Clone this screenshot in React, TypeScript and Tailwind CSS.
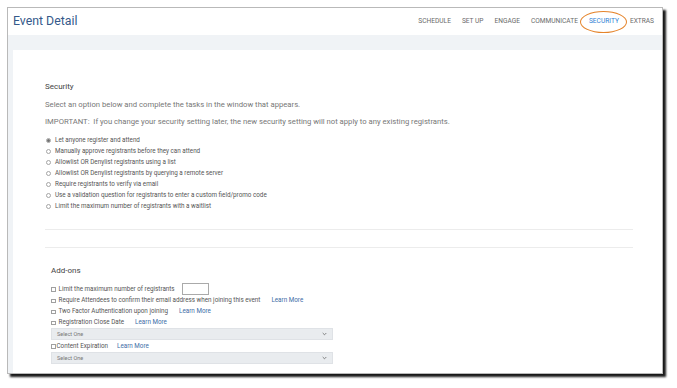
import React from 'react';

const NAV = ['SCHEDULE', 'SET UP', 'ENGAGE', 'COMMUNICATE', 'SECURITY', 'EXTRAS'];

const OPTIONS = [
  'Let anyone register and attend',
  'Manually approve registrants before they can attend',
  'Allowlist OR Denylist registrants using a list',
  'Allowlist OR Denylist registrants by querying a remote server',
  'Require registrants to verify via email',
  'Use a validation question for registrants to enter a custom field/promo code',
  'Limit the maximum number of registrants with a waitlist',
];

function Radio({ checked }: { checked?: boolean }) {
  return (
    <span className="w-[5px] h-[5px] rounded-full border-[0.5px] border-[#a5a5a5] bg-white flex items-center justify-center shrink-0">
      {checked && <span className="w-[3px] h-[3px] rounded-full bg-[#707070]" />}
    </span>
  );
}

function Box() {
  return <span className="w-[4.5px] h-[4.5px] border-[0.5px] border-[#a0a0a0] bg-white shrink-0" />;
}

function LearnMore() {
  return <span className="text-[#3d6da6] ml-[8px]">Learn More</span>;
}

function SelectOne() {
  return (
    <div className="w-[282px] h-[12px] bg-[#e9ecef] border-[0.5px] border-[#dfe2e6] flex items-center justify-between px-[5px] text-[5.5px] text-[#777]">
      <span>Select One</span>
      <svg width="5" height="4" viewBox="0 0 5 4">
        <path d="M0.7 1 L2.5 2.8 L4.3 1" fill="none" stroke="#666" strokeWidth="0.8" />
      </svg>
    </div>
  );
}

export default function App() {
  return (
    <div className="w-[677px] h-[388px] bg-white pt-[7px] pl-[7px]" style={{ fontFamily: 'Roboto, "Liberation Sans", sans-serif' }}>
      <div className="w-[656px] h-[367px] border border-[#b9b9b9] bg-white flex flex-col shadow-[3px_3px_2px_rgba(0,0,0,0.9)]">
        <div className="h-[27px] flex items-center justify-between pl-[5px] pr-[8px] shrink-0">
          <span className="text-[12.3px] text-[#35598a] leading-none">Event Detail</span>
          <div className="flex items-center gap-[11px] text-[6.6px] text-[#6a6a6a] pt-[1px]">
            {NAV.map((n) =>
              n === 'SECURITY' ? (
                <span key={n} className="relative text-[#2f7fd4]">
                  {n}
                  <span className="absolute left-[-9px] right-[-8px] top-[-6px] bottom-[-6px] rounded-[50%] border-[1.5px] border-[#e5842b]" />
                </span>
              ) : (
                <span key={n}>{n}</span>
              )
            )}
          </div>
        </div>
        <div className="flex-1 bg-[#f0f3f6] pt-[15px] pl-[5px] flex">
          <div className="flex-1 bg-white pl-[32px] pr-[29px] pt-[33px]">
            <div className="text-[8px] text-[#444] leading-none">Security</div>
            <div className="text-[7.7px] text-[#777] mt-[10px] leading-none">Select an option below and complete the tasks in the window that appears.</div>
            <div className="text-[7.7px] text-[#777] mt-[9px] leading-none">IMPORTANT:&nbsp; If you change your security setting later, the new security setting will not apply to any existing registrants.</div>
            <div className="mt-[10px] flex flex-col">
              {OPTIONS.map((o, i) => (
                <div key={o} className="h-[11px] flex items-center gap-[4px] pl-[1px] text-[6.3px] text-[#555]">
                  <Radio checked={i === 0} />
                  <span>{o}</span>
                </div>
              ))}
            </div>
            <div className="mt-[17px] border-t border-[#ececec]" />
            <div className="mt-[17px] border-t border-[#ececec]" />
            <div className="pl-[6px] pt-[19px]">
              <div className="text-[8px] text-[#444] leading-none">Add-ons</div>
              <div className="mt-[8px] flex flex-col text-[6.3px] text-[#555]">
                <div className="h-[12px] flex items-center gap-[3px]">
                  <Box />
                  <span>Limit the maximum number of registrants</span>
                  <span className="ml-[4px] w-[27px] h-[12px] border-[0.5px] border-[#aaa] bg-white" />
                </div>
                <div className="h-[11px] flex items-center gap-[3px]">
                  <Box />
                  <span>Require Attendees to confirm their email address when joining this event</span>
                  <LearnMore />
                </div>
                <div className="h-[11px] flex items-center gap-[3px]">
                  <Box />
                  <span>Two Factor Authentication upon joining</span>
                  <LearnMore />
                </div>
                <div className="h-[11px] flex items-center gap-[3px]">
                  <Box />
                  <span>Registration Close Date</span>
                  <LearnMore />
                </div>
                <SelectOne />
                <div className="h-[12px] flex items-center gap-[1px]">
                  <Box />
                  <span>Content Expiration</span>
                  <LearnMore />
                </div>
                <SelectOne />
              </div>
            </div>
          </div>
        </div>
      </div>
    </div>
  );
}
